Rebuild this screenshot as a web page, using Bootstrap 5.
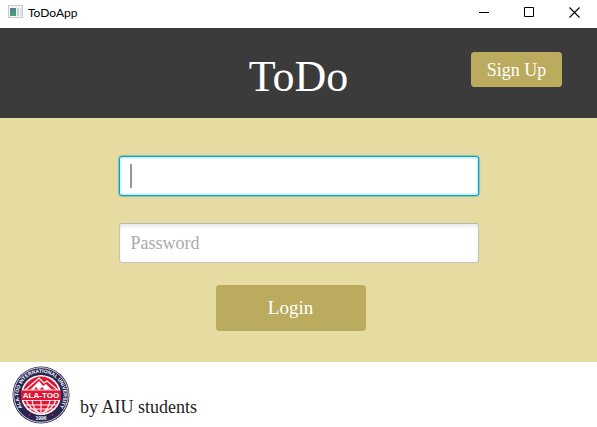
<!DOCTYPE html>
<html lang="en">
<head>
<meta charset="utf-8">
<meta name="viewport" content="width=device-width, initial-scale=1">
<title>ToDoApp</title>
<link href="https://cdn.jsdelivr.net/npm/bootstrap@5.3.0/dist/css/bootstrap.min.css" rel="stylesheet">
<style>
body { font-family: "Liberation Serif", "Times New Roman", serif; color: #222; }
.titlebar { height: 28px; font: 12px/26px Lato, "Noto Sans", sans-serif; color: #000; }
.win-btn { width: 45px; height: 24px; border: 0; background: none; padding: 0; color: #000; display: flex; align-items: center; justify-content: center; }
.app-header { display: grid; grid-template-columns: 1fr auto 1fr; align-items: center; height: 90px; background: #3b3b3b; padding: 0 35px; }
.app-header h1 { grid-column: 2; font-size: 44px; line-height: 48px; color: #fff; margin: 8px 0 0; font-weight: 400; }
.app-header .btn { grid-column: 3; justify-self: end; width: 91px; height: 35px; margin-bottom: 7px; }
.btn-gold { --bs-btn-color: #fff; --bs-btn-bg: #baab5e; --bs-btn-border-color: #baab5e; --bs-btn-hover-color: #fff; --bs-btn-hover-bg: #a99a4f; --bs-btn-hover-border-color: #a99a4f; --bs-btn-border-radius: 3px; --bs-btn-padding-x: 0; --bs-btn-padding-y: 0; font-size: 18px; line-height: 24px; }
.login-area { background: #e6dca1; padding: 38px 16px 31px; }
.login-form { max-width: 360px; margin: 0 auto; }
.login-form .form-control { height: 40px; border-radius: 3px; border-color: #c3c2c2; border-top-color: #b9b9b5; padding: 4px 11px; font-size: 18px; line-height: 24px; box-shadow: inset 0 3px 3px #ececec; }
.login-form .form-control::placeholder { color: #aaa; }
.login-form .user-field, .login-form .user-field:focus { border-color: #039ed3; box-shadow: 0 0 1px 1px #039ed366, inset 0 0 0 2px #e0f2f8; caret-color: transparent; margin-bottom: 27px; }
.login-form .user-field:placeholder-shown { background: linear-gradient(#969696, #969696) 10px center / 2px 24px no-repeat #fff; }
.login-form .btn { width: 150px; height: 46px; margin: 22px 16px 0 0; font-size: 19px; }
.app-footer { padding: 4px 12px; gap: 10px; font-size: 18px; line-height: 24px; }
.app-footer .credit { margin-top: 24px; }
</style>
<script src="https://cdn.jsdelivr.net/npm/bootstrap@5.3.0/dist/js/bootstrap.bundle.min.js"></script>
</head>
<body>
<div class="titlebar d-flex justify-content-between bg-white">
  <div class="d-flex ps-2">
    <svg class="mt-1 me-1" width="16" height="16" viewBox="1 0 16 16" aria-hidden="true">
      <defs><linearGradient id="pane" x2="0" y2="1"><stop stop-color="#5479a8"/><stop offset="1" stop-color="#45a86c"/></linearGradient></defs>
      <path fill="#c7cbd0" d="M1 1h15v13H1z"/><path fill="#f4f5f6" d="M2 2h13v11H2z"/>
      <path fill="url(#pane)" d="M3 4h6v8H3z"/><path fill="#b9dac9" d="M10 4h2v8h-2z"/><path fill="#dfe3e8" d="M13 4h2v8h-2z"/>
    </svg>
    <span>ToDoApp</span>
  </div>
  <div class="d-flex">
    <button class="win-btn" type="button" aria-label="Minimize"><svg width="11" height="11"><path d="M0 5.5h10" stroke="#000"/></svg></button>
    <button class="win-btn" type="button" aria-label="Maximize"><svg width="11" height="11"><path d="M.5.5h9v9h-9z" fill="none" stroke="#000"/></svg></button>
    <button class="win-btn" type="button" aria-label="Close"><svg width="11" height="11"><path d="M.5.5l10 10M10.5.5l-10 10" stroke="#000" stroke-width="1.1"/></svg></button>
  </div>
</div>
<header class="app-header">
  <h1>ToDo</h1>
  <button class="btn btn-gold" type="button">Sign Up</button>
</header>
<main class="login-area">
  <form class="login-form d-flex flex-column align-items-center">
    <input class="form-control user-field" type="text" placeholder=" " aria-label="Username" autocomplete="username">
    <input class="form-control" type="password" placeholder="Password" aria-label="Password" autocomplete="current-password">
    <button class="btn btn-gold" type="submit">Login</button>
  </form>
</main>
<footer class="app-footer d-flex align-items-center">
  <svg width="58" height="58" viewBox="0 0 58 58" role="img" aria-label="Ala-Too International University">
    <defs>
      <clipPath id="disc"><circle cx="29" cy="29" r="18.5"/></clipPath>
      <path id="ring" d="M16.2 47.4A22.4 22.4 0 1 1 41.8 47.4"/>
    </defs>
    <circle cx="29" cy="29" r="28.5" fill="#28264f"/>
    <circle cx="29" cy="29" r="27.3" fill="none" stroke="#fff" stroke-width=".8"/>
    <circle cx="29" cy="29" r="20" fill="#fff"/>
    <g clip-path="url(#disc)">
      <path fill="#df1734" d="M10 10h38v38H10z"/>
      <path fill="none" stroke="#fff" stroke-width="1.1" d="M12 25L27 12l5 5 3-2 12 10"/>
      <path fill="#fff" d="M16 26l11-11 4 5 3-2 8 8-6-3-2 2-4-4-3 3-3-3-3 4z"/>
      <g fill="none" stroke="#fff" stroke-width="1.1"><path d="M11 39h36M15 43h28M29 34v14M20 34q1 10 9 14 8-4 9-14M14 34q3 9 15 14 12-5 15-14"/></g>
    </g>
    <path fill="#df1734" d="M9 24h40v10.500H9z"/>
    <path fill="none" stroke="#fff" stroke-width=".8" d="M10 24h38M10 34.500h38"/>
    <g fill="#fff" font-family="Liberation Sans, sans-serif" font-weight="700" text-anchor="middle">
      <text x="29" y="32" font-size="8">ALA-TOO</text>
      <text font-size="5"><textPath href="#ring" startOffset="50%">ALA-TOO INTERNATIONAL UNIVERSITY</textPath></text>
      <text x="29" y="54" font-size="5">1996</text>
    </g>
    <g fill="#df1734"><circle cx="17.500" cy="49" r="1"/><circle cx="40.500" cy="49" r="1"/></g>
  </svg>
  <span class="credit">by AIU students</span>
</footer>
</body>
</html>
